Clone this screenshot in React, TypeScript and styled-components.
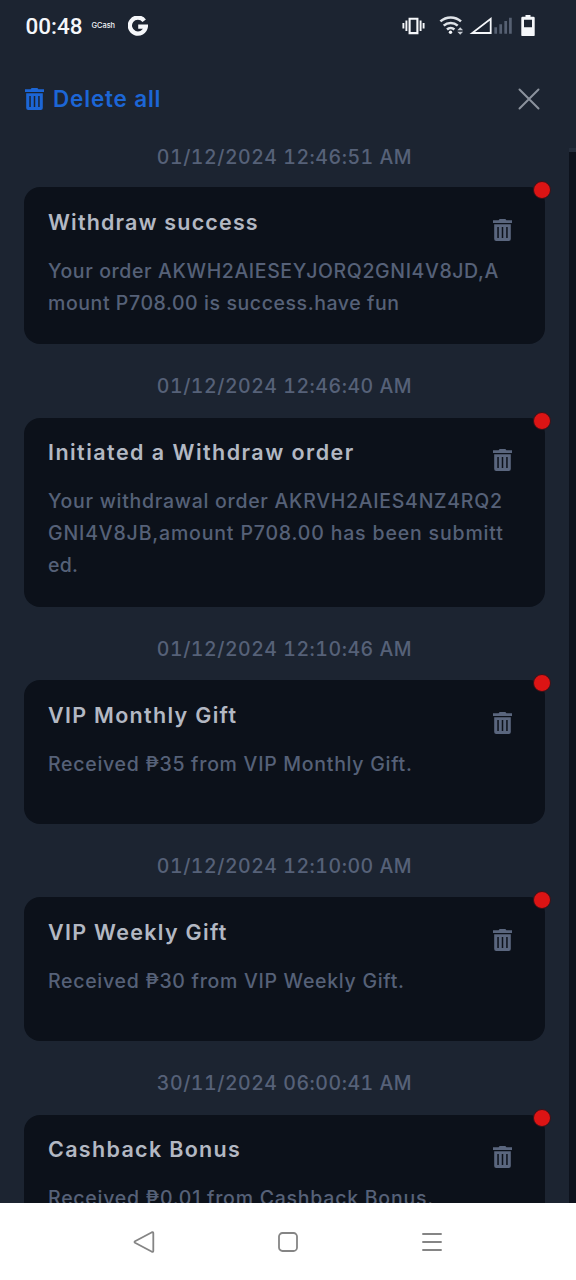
import React from "react";
import styled, { createGlobalStyle } from "styled-components";

const GlobalStyle = createGlobalStyle`
  * { box-sizing: border-box; }
  body {
    margin: 0;
    background: #1c2431;
    font-family: Inter, "Open Sans", sans-serif;
    font-weight: 500;
  }
  svg { display: block; }
  button { padding: 0; border: 0; background: none; font: inherit; color: inherit; }
`;

const Screen = styled.div`
  display: flex;
  flex-direction: column;
  height: 1280px;
  overflow: hidden;
  background: #1c2431;
`;

const StatusBar = styled.header`
  display: flex;
  align-items: center;
  flex: none;
  height: 52px;
  padding: 0 40px 0 25.5px;
  color: #f5f7fa;
`;

const Clock = styled.span`
  width: 66px;
  font: 500 22.5px/52px Roboto, sans-serif;
`;

const Carrier = styled.span`
  width: 36.5px;
  font: 500 7.4px/52px Inter, sans-serif;
`;

const StatusIcons = styled.div`
  display: flex;
  margin-left: auto;
`;

const Toolbar = styled.div`
  display: flex;
  flex: none;
  align-items: center;
  justify-content: space-between;
  height: 93px;
  padding: 0 36px 0 25.4px;
`;

const DeleteAll = styled.button`
  display: flex;
  align-items: center;
  gap: 8.6px;
  color: #1c66d6;
  font-size: 22.5px;
  font-weight: 600;
  line-height: 28px;
  letter-spacing: 0.82px;
`;

const CloseButton = styled.button`
  color: #8b929d;
`;

const Body = styled.div`
  display: flex;
  flex: 1;
  min-height: 0;
`;

const Feed = styled.main`
  flex: 1;
  overflow: hidden;
  padding: 0 24px;
`;

const ScrollTrack = styled.div`
  flex: none;
  width: 7px;
  margin-top: 3px;
  border-top: 4px solid #242d3b;
  background: #0d121c;
`;

const Stamp = styled.time<{ $first?: boolean }>`
  display: block;
  height: ${(p) => (p.$first ? 42.4 : 73.55)}px;
  padding-top: ${(p) => (p.$first ? 0.5 : 31.2)}px;
  color: #566178;
  font-size: 19.5px;
  line-height: 23px;
  letter-spacing: 0.52px;
  font-variant-numeric: tabular-nums;
  text-align: center;
`;

const Card = styled.article`
  position: relative;
  display: grid;
  grid-template-columns: 1fr auto;
  align-content: start;
  min-height: 143.7px;
  padding: 19.5px 33px 25.3px 24px;
  border-radius: 16px;
  background: #0c111a;
`;

const UnreadDot = styled.span`
  position: absolute;
  top: -6px;
  right: -6px;
  width: 18px;
  height: 18px;
  border: 1px solid #3a1119;
  border-radius: 50%;
  background: #dc1414;
`;

const Title = styled.h2<{ $tracking: number }>`
  margin: 0;
  height: 48px;
  color: #b3b8c3;
  font-size: 21.5px;
  font-weight: 600;
  line-height: 31px;
  letter-spacing: ${(p) => p.$tracking}px;
`;

const RemoveButton = styled.button`
  align-self: start;
  margin-top: 12.2px;
  color: #5a667e;
`;

const Message = styled.p`
  grid-column: 1 / -1;
  margin: 0;
  color: #566178;
  font-size: 19.5px;
  line-height: 32px;
  white-space: nowrap;
`;

const Line = styled.span<{ $tracking: number }>`
  display: block;
  letter-spacing: ${(p) => p.$tracking}px;
`;

const NavBar = styled.nav`
  display: grid;
  grid-template-columns: repeat(3, 1fr);
  flex: none;
  width: 432px;
  height: 77px;
  margin: 0 auto;
  align-items: center;
  justify-items: center;
`;

const NavArea = styled.footer`
  flex: none;
  background: #fff;
  color: #858585;
`;

function TrashIcon({ size = 22 }: { size?: number }) {
  return (
    <svg width={size * 19 / 22} height={size} viewBox="0 0 19 22" fill="currentColor">
      <path d="M0 1.2h5.6L6.6 0h5.8l1 1.2H19v2.9H0z" />
      <path
        fillRule="evenodd"
        d="M1.2 5.2h16.6V20a2 2 0 0 1-2 2H3.2a2 2 0 0 1-2-2zM4.3 8v11h1.5V8zm4.45 0v11h1.5V8zm4.45 0v11h1.5V8z"
      />
    </svg>
  );
}

function GoogleG() {
  return (
    <svg width="20" height="21" viewBox="0 0 20 21" fill="none" stroke="currentColor" strokeWidth="4.3">
      <path d="M16.2 4.7A8 8 0 1 0 17.8 10.7H10.2" />
    </svg>
  );
}

function StatusGlyphs() {
  return (
    <svg width="134" height="24" viewBox="402 14 134 24" fill="none" stroke="currentColor">
      <path d="M409.6 18.7h7.8v14.4h-7.8z" strokeWidth="2.1" />
      <path d="M406.4 20.5v10.5M403.4 23v5.4M420.6 20.5v10.5M423.6 23v5.4" strokeWidth="1.9" />
      <g strokeWidth="2.6" stroke="#dfe3e8">
        <path d="M440.4 21.4a15.5 15.5 0 0 1 20.6 0" />
        <path d="M443.7 25.6a10.5 10.5 0 0 1 14 0" />
        <path d="M447 29.4a5.6 5.6 0 0 1 7.4 0" />
      </g>
      <circle cx="450.5" cy="32.3" r="1.7" fill="currentColor" stroke="none" />
      <path d="M457.3 30.2l2.9-3 2.9 3zM457.3 31.8l2.9 3 2.9-3z" fill="#c6cbd2" stroke="none" />
      <path d="M472.2 33h18.5V18.8z" strokeWidth="1.8" />
      <path d="M495.7 33.8v-6.5M500.7 33.8v-9.6M505.7 33.8v-12.8M510.4 33.8v-16" stroke="#566072" strokeWidth="2.7" />
      <path
        d="M525.5 15h5v1.7h3q1.2 0 1.2 1.2v17q0 1.2-1.2 1.2h-11q-1.2 0-1.2-1.2v-17q0-1.2 1.2-1.2h3zM524 19.7v7.5h8v-7.5z"
        fill="currentColor"
        fillRule="evenodd"
        stroke="none"
      />
    </svg>
  );
}

interface Notice {
  stamp: string;
  title: string;
  titleTracking: number;
  lines: [string, number][];
}

const notices: Notice[] = [
  {
    stamp: "01/12/2024 12:46:51 AM",
    title: "Withdraw success",
    titleTracking: 1.16,
    lines: [
      ["Your order AKWH2AIESEYJORQ2GNI4V8JD,A", 0.61],
      ["mount P708.00 is success.have fun", 0.58],
    ],
  },
  {
    stamp: "01/12/2024 12:46:40 AM",
    title: "Initiated a Withdraw order",
    titleTracking: 1.46,
    lines: [
      ["Your withdrawal order AKRVH2AIES4NZ4RQ2", 0.72],
      ["GNI4V8JB,amount P708.00 has been submitt", 0.84],
      ["ed.", 0.3],
    ],
  },
  {
    stamp: "01/12/2024 12:10:46 AM",
    title: "VIP Monthly Gift",
    titleTracking: 1.3,
    lines: [["Received ₱35 from VIP Monthly Gift.", 0.72]],
  },
  {
    stamp: "01/12/2024 12:10:00 AM",
    title: "VIP Weekly Gift",
    titleTracking: 1.3,
    lines: [["Received ₱30 from VIP Weekly Gift.", 0.71]],
  },
  {
    stamp: "30/11/2024 06:00:41 AM",
    title: "Cashback Bonus",
    titleTracking: 1.32,
    lines: [["Received ₱0.01 from Cashback Bonus.", 0.76]],
  },
];

export default function App() {
  return (
    <Screen>
      <GlobalStyle />
      <StatusBar>
        <Clock>00:48</Clock>
        <Carrier>GCash</Carrier>
        <GoogleG />
        <StatusIcons>
          <StatusGlyphs />
        </StatusIcons>
      </StatusBar>
      <Toolbar>
        <DeleteAll>
          <TrashIcon />
          Delete all
        </DeleteAll>
        <CloseButton aria-label="Close">
          <svg width="22" height="22" viewBox="0 0 22 22" stroke="currentColor" strokeWidth="2" strokeLinecap="round">
            <path d="M1.5 1.5l19 19M20.5 1.5l-19 19" />
          </svg>
        </CloseButton>
      </Toolbar>
      <Body>
        <Feed>
          {notices.map((n, i) => (
            <React.Fragment key={n.stamp}>
              <Stamp $first={i === 0}>{n.stamp}</Stamp>
              <Card>
                <UnreadDot />
                <Title $tracking={n.titleTracking}>{n.title}</Title>
                <RemoveButton aria-label="Delete">
                  <TrashIcon />
                </RemoveButton>
                <Message>
                  {n.lines.map(([text, tracking]) => (
                    <Line key={text} $tracking={tracking}>
                      {text}
                    </Line>
                  ))}
                </Message>
              </Card>
            </React.Fragment>
          ))}
        </Feed>
        <ScrollTrack />
      </Body>
      <NavArea>
        <NavBar>
          <svg width="22" height="22" viewBox="0 0 22 22" fill="none" stroke="currentColor" strokeWidth="1.8" strokeLinejoin="round">
            <path d="M2 10.2L19 1.2q1.3-.5 1.3 1v17.6q0 1.5-1.3 1L2 11.8q-1-.8 0-1.6z" />
          </svg>
          <svg width="20" height="20" viewBox="0 0 20 20" fill="none" stroke="currentColor" strokeWidth="1.8">
            <rect x="1" y="1" width="18" height="18" rx="3.5" />
          </svg>
          <svg width="20" height="20" viewBox="0 0 20 20" stroke="currentColor" strokeWidth="1.9" strokeLinecap="round">
            <path d="M1 2h18M1 10h18M1 18h18" />
          </svg>
        </NavBar>
      </NavArea>
    </Screen>
  );
}
